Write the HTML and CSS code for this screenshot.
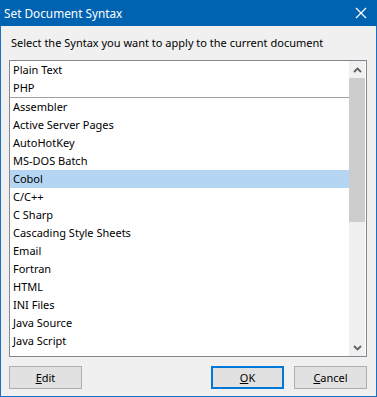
FILE: index.html
```html
<!DOCTYPE html>
<html>
<head>
    <title>Set Document Syntax</title>
    <link rel="stylesheet" href="styles.css">
</head>
<body>

<div class="window">
    <div class="titlebar">
        <span class="title">Set Document Syntax</span>
        <svg class="close" width="12" height="12" viewBox="0 0 12 12">
            <path d="M1 1 L11 11 M11 1 L1 11" stroke="#fff" stroke-width="1.2" fill="none"/>
        </svg>
    </div>
    <div class="content">
        <div class="label">Select the Syntax you want to apply to the current document</div>
        <div class="listbox">
            <div class="items">
                <div class="item">Plain Text</div>
                <div class="item">PHP</div>
                <div class="separator"></div>
                <div class="item">Assembler</div>
                <div class="item">Active Server Pages</div>
                <div class="item">AutoHotKey</div>
                <div class="item">MS-DOS Batch</div>
                <div class="item selected">Cobol</div>
                <div class="item">C/C++</div>
                <div class="item">C Sharp</div>
                <div class="item">Cascading Style Sheets</div>
                <div class="item">Email</div>
                <div class="item">Fortran</div>
                <div class="item">HTML</div>
                <div class="item">INI Files</div>
                <div class="item">Java Source</div>
                <div class="item">Java Script</div>
            </div>
            <div class="scrollbar">
                <div class="arrow">
                    <svg width="9" height="6" viewBox="0 0 9 6"><path d="M1 5 L4.5 1.5 L8 5" stroke="#606060" stroke-width="1.8" fill="none"/></svg>
                </div>
                <div class="thumb"></div>
                <div class="track"></div>
                <div class="arrow">
                    <svg width="9" height="6" viewBox="0 0 9 6"><path d="M1 1 L4.5 4.5 L8 1" stroke="#606060" stroke-width="1.8" fill="none"/></svg>
                </div>
            </div>
        </div>
        <div class="buttons">
            <button class="btn"><u>E</u>dit</button>
            <button class="btn default"><u>O</u>K</button>
            <button class="btn"><u>C</u>ancel</button>
        </div>
    </div>
</div>

</body>
</html>
```

FILE: styles.css
```css
body {
    margin: 0;
    font-family: "Noto Sans", sans-serif;
    font-size: 11px;
    color: #000;
    background-color: #f0f0f0;
}

.window {
    width: 377px;
    height: 397px;
    box-sizing: border-box;
    border: 1px solid #1a6fc2;
    border-top: none;
    background-color: #f0f0f0;
    display: flex;
    flex-direction: column;
}

.titlebar {
    height: 26px;
    margin: 0 -1px;
    background-color: #0063b1;
    color: white;
    font-size: 11.8px;
    display: flex;
    align-items: center;
    padding: 0 10px 0 4px;
}

.title {
    flex: 1;
}

.close {
    display: block;
}

.content {
    flex: 1;
    padding: 9px 9px 0 8px;
}

.label {
    height: 16px;
    line-height: 16px;
    padding-left: 2px;
    margin-bottom: 9px;
}

.listbox {
    height: 297px;
    box-sizing: border-box;
    border: 1px solid #828790;
    background-color: white;
    display: flex;
}

.items {
    flex: 1;
    overflow: hidden;
}

.item {
    height: 18px;
    line-height: 18px;
    padding-left: 3px;
    white-space: nowrap;
}

.item.selected {
    background-color: #b5d6f2;
}

.separator {
    height: 1px;
    background-color: #a0a0a0;
}

.scrollbar {
    width: 16px;
    margin-right: 1px;
    background-color: #f0f0f0;
    display: flex;
    flex-direction: column;
}

.arrow {
    height: 17px;
    display: flex;
    align-items: center;
    justify-content: center;
}

.thumb {
    height: 144px;
    background-color: #cdcdcd;
}

.track {
    flex: 1;
}

.buttons {
    display: flex;
    gap: 10px;
    margin-top: 9px;
}

.btn {
    width: 73px;
    height: 23px;
    box-sizing: border-box;
    border: 1px solid #adadad;
    background-color: #e1e1e1;
    font-family: "Noto Sans", sans-serif;
    font-size: 11px;
    padding: 0;
    color: #000;
}

.btn.default {
    margin-left: auto;
    border: 2px solid #0078d7;
}
```
